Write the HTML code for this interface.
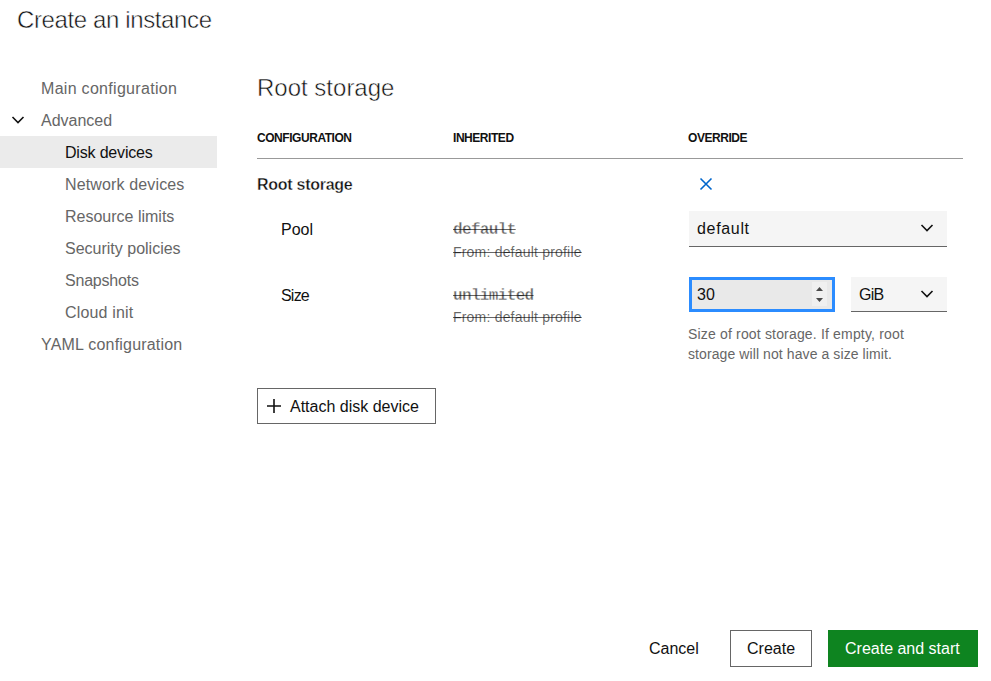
<!DOCTYPE html>
<html><head><meta charset="utf-8">
<style>
html,body{margin:0;padding:0;background:#fff;width:991px;height:681px;overflow:hidden;position:relative;}
body{font-family:"Liberation Sans",sans-serif;color:#111;}
.t{position:absolute;white-space:nowrap;line-height:1;}
.g{color:#666;}
.b{position:absolute;box-sizing:border-box;}
.m{font-family:"Liberation Mono",monospace;font-weight:bold;-webkit-text-stroke:0.3px #fff;color:rgba(0,0,0,.6);text-decoration:line-through;text-decoration-color:rgba(0,0,0,.6);}
.lt{-webkit-text-stroke:0.5px #fff;}
.md{font-weight:bold;-webkit-text-stroke:0.35px #fff;}
.mh{font-weight:bold;}
.s{color:rgba(0,0,0,.6);text-decoration:line-through;}
</style></head><body>
<!-- title -->
<div class="t lt" style="left:17px;top:8px;font-size:24px;letter-spacing:-0.38px;">Create an instance</div>

<!-- sidebar -->
<div class="b" style="left:0;top:136px;width:217px;height:32px;background:#ebebeb;"></div>
<svg class="b" style="left:10.5px;top:114px;" width="14" height="12" viewBox="0 0 14 12"><path d="M1.5 3 L7 8.5 L12.5 3" fill="none" stroke="#111" stroke-width="1.6"/></svg>
<div class="t g" style="left:41px;top:81px;font-size:16px;letter-spacing:0.3px;">Main configuration</div>
<div class="t g" style="left:41px;top:113px;font-size:16px;">Advanced</div>
<div class="t" style="left:65px;top:145px;font-size:16px;letter-spacing:-0.18px;">Disk devices</div>
<div class="t g" style="left:65px;top:177px;font-size:16px;letter-spacing:0.14px;">Network devices</div>
<div class="t g" style="left:65px;top:209px;font-size:16px;">Resource limits</div>
<div class="t g" style="left:65px;top:241px;font-size:16px;">Security policies</div>
<div class="t g" style="left:65px;top:273px;font-size:16px;letter-spacing:-0.2px;">Snapshots</div>
<div class="t g" style="left:65px;top:305px;font-size:16px;letter-spacing:0.17px;">Cloud init</div>
<div class="t g" style="left:41px;top:337px;font-size:16px;letter-spacing:0.2px;">YAML configuration</div>

<!-- main heading -->
<div class="t lt" style="left:257px;top:76px;font-size:24px;">Root storage</div>

<!-- table headers -->
<div class="t mh" style="left:257px;top:132px;font-size:12px;letter-spacing:-0.45px;">CONFIGURATION</div>
<div class="t mh" style="left:453px;top:132px;font-size:12px;letter-spacing:-0.45px;">INHERITED</div>
<div class="t mh" style="left:688px;top:132px;font-size:12px;letter-spacing:-0.45px;">OVERRIDE</div>
<div class="b" style="left:257px;top:158px;width:706px;height:1px;background:#999;"></div>

<!-- Root storage row -->
<div class="t md" style="left:257px;top:177px;font-size:16px;letter-spacing:-0.27px;">Root storage</div>
<svg class="b" style="left:699px;top:177px;" width="14" height="14" viewBox="0 0 14 14"><path d="M1.5 1.5 L12.5 12.5 M12.5 1.5 L1.5 12.5" fill="none" stroke="#0066cc" stroke-width="1.6"/></svg>

<!-- Pool row -->
<div class="t" style="left:281px;top:222px;font-size:16px;">Pool</div>
<div class="t m" style="left:453px;top:222px;font-size:16px;letter-spacing:-0.65px;">default</div>
<div class="t s" style="left:453px;top:245px;font-size:14px;letter-spacing:0.2px;">From: default profile</div>
<div class="b" style="left:689px;top:211px;width:258px;height:36px;background:#f5f5f5;border-bottom:1px solid #666;"></div>
<div class="t" style="left:697px;top:221px;font-size:16px;letter-spacing:0.67px;">default</div>
<svg class="b" style="left:920px;top:222px;" width="14" height="12" viewBox="0 0 14 12"><path d="M1.5 3 L7 8.5 L12.5 3" fill="none" stroke="#111" stroke-width="1.6"/></svg>

<!-- Size row -->
<div class="t" style="left:281px;top:288px;font-size:16px;letter-spacing:-0.8px;">Size</div>
<div class="t m" style="left:453px;top:288px;font-size:16px;letter-spacing:-0.65px;">unlimited</div>
<div class="t s" style="left:453px;top:310px;font-size:14px;letter-spacing:0.2px;">From: default profile</div>

<div class="b" style="left:689px;top:277px;width:146px;height:35px;background:#e9e9e9;border:3px solid #2b8cff;"></div>
<div class="b" style="left:812px;top:282px;width:15px;height:24px;background:#f0f0f0;"></div>
<svg class="b" style="left:815px;top:286px;" width="9" height="18" viewBox="0 0 9 18"><path d="M1 5 L4.5 1 L8 5 Z M1 12 L4.5 16 L8 12 Z" fill="#4a4a4a"/></svg>
<div class="t" style="left:697px;top:287px;font-size:16px;">30</div>

<div class="b" style="left:851px;top:277px;width:96px;height:35px;background:#f5f5f5;border-bottom:1px solid #666;"></div>
<div class="t" style="left:859px;top:287px;font-size:16px;letter-spacing:-0.7px;">GiB</div>
<svg class="b" style="left:920px;top:288px;" width="14" height="12" viewBox="0 0 14 12"><path d="M1.5 3 L7 8.5 L12.5 3" fill="none" stroke="#111" stroke-width="1.6"/></svg>

<div class="t g" style="left:688px;top:327px;font-size:14px;letter-spacing:0.17px;">Size of root storage. If empty, root</div>
<div class="t g" style="left:688px;top:347px;font-size:14px;letter-spacing:0.09px;">storage will not have a size limit.</div>

<!-- attach button -->
<div class="b" style="left:257px;top:388px;width:179px;height:36px;border:1px solid #666;"></div>
<svg class="b" style="left:266px;top:398px;" width="16" height="16" viewBox="0 0 16 16"><path d="M8 1 V15 M1 8 H15" fill="none" stroke="#111" stroke-width="1.6"/></svg>
<div class="t" style="left:290px;top:399px;font-size:16px;">Attach disk device</div>

<!-- footer -->
<div class="t" style="left:649px;top:641px;font-size:16px;">Cancel</div>
<div class="b" style="left:730px;top:630px;width:82px;height:37px;border:1px solid #666;"></div>
<div class="t" style="left:747px;top:641px;font-size:16px;">Create</div>
<div class="b" style="left:828px;top:630px;width:150px;height:37px;background:#0e8420;"></div>
<div class="t" style="left:845px;top:641px;font-size:16px;color:#fff;">Create and start</div>
</body></html>
